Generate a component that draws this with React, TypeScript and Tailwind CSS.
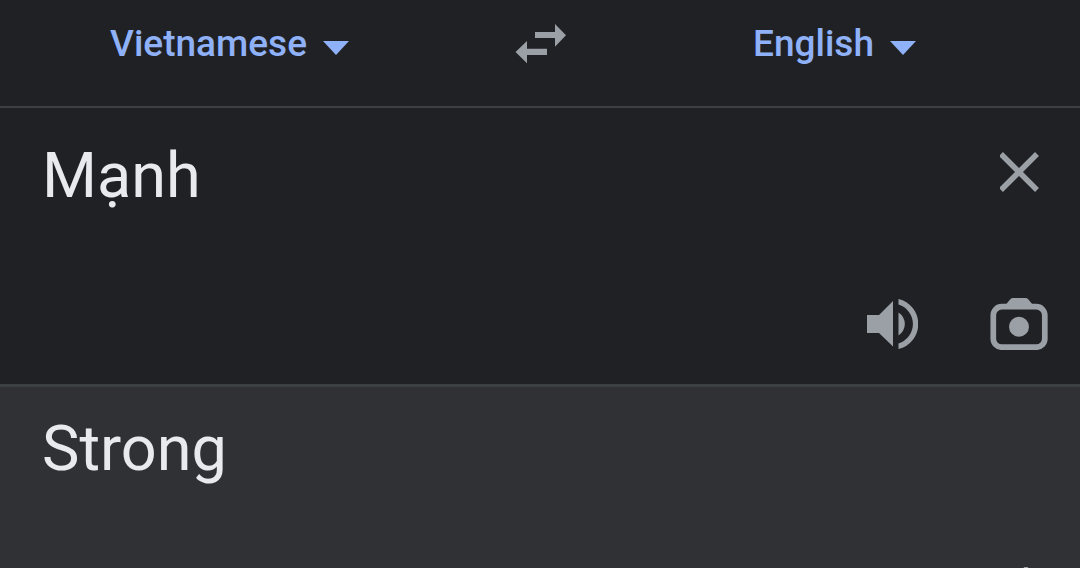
import { useState } from 'react'

const languages = ['Vietnamese', 'English']

type LanguageSelectProps = {
  label: string
  value: string
  onChange: (value: string) => void
}

function LanguageSelect({ label, value, onChange }: LanguageSelectProps) {
  return (
    <label className="flex items-center gap-4">
      <select
        aria-label={label}
        value={value}
        onChange={(e) => onChange(e.target.value)}
        className="appearance-none field-sizing-content bg-transparent text-[37px] leading-10 font-medium text-[#8fb1f7] outline-none"
      >
        {languages.map((language) => (
          <option key={language}>{language}</option>
        ))}
      </select>
      <svg className="mt-2 h-3.5 w-6.5" viewBox="0 0 26 14" fill="#8fb1f7" aria-hidden="true">
        <path d="M0 0h26L13 14z" />
      </svg>
    </label>
  )
}

function App() {
  const [source, setSource] = useState('Vietnamese')
  const [target, setTarget] = useState('English')
  const [text, setText] = useState('Mạnh')

  const swap = () => {
    setSource(target)
    setTarget(source)
  }

  return (
    <div className="flex h-screen flex-col overflow-hidden bg-[#202124] font-['Roboto','Noto_Sans',sans-serif] text-[#e8eaed]">
      {/* Language bar */}
      <header className="grid shrink-0 grid-cols-[1fr_162px_1fr] items-start border-b-2 border-[#3c4043] pt-6 pb-[42px]">
        <div className="flex justify-center">
          <LanguageSelect label="Source language" value={source} onChange={setSource} />
        </div>
        <button aria-label="Swap languages" onClick={swap} className="flex justify-center">
          <svg className="h-10 w-13" viewBox="0 0 52 40" fill="#9aa0a6">
            <path d="M21 8H41V0L52 11.300L41 22.700V14H21zM33 24.700V31H13V39.300L1.500 28L13 17V24.700z" />
          </svg>
        </button>
        <div className="flex justify-center pr-8">
          <LanguageSelect label="Target language" value={target} onChange={setTarget} />
        </div>
      </header>

      {/* Source text */}
      <section className="flex shrink-0 flex-col border-b-3 border-[#3c4043] pt-8 pr-8">
        <div className="flex items-start justify-between">
          <textarea
            aria-label="Source text"
            rows={1}
            value={text}
            onChange={(e) => setText(e.target.value)}
            className="min-w-0 flex-1 resize-none bg-transparent pl-10.5 text-[63px] leading-[72px] outline-none"
          />
          <button aria-label="Clear text" onClick={() => setText('')} className="mt-3 mr-2">
            <svg className="h-10 w-10" viewBox="0 0 40 40" stroke="#9aa0a6" strokeWidth="5.500">
              <path d="M1 2l36 36M37 2L1 38" />
            </svg>
          </button>
        </div>
        <div className="mt-[86px] mb-[34px] flex items-center justify-end gap-18">
          <button aria-label="Listen">
            <svg className="h-13 w-13" viewBox="0 0 52 52" fill="#9aa0a6">
              <path d="M1 17H13L27 3V48.500L13 35H1zM32.500 14.500A13.600 13.600 0 0 1 32.500 37.500z" />
              <path d="M32.500 1A25.700 25.700 0 0 1 32.500 51V45.500A20.400 20.400 0 0 0 32.500 6.500z" />
            </svg>
          </button>
          <button aria-label="Translate from camera">
            <svg className="h-13 w-14.5" viewBox="0 0 58 52">
              <path d="M15.500 7L20.500 1Q21.500 0 23 0H35.500Q37 0 38 1L43 7z" fill="#9aa0a6" />
              <rect x="3.300" y="8.700" width="51.500" height="40.500" rx="8.500" fill="none" stroke="#9aa0a6" strokeWidth="5.700" />
              <circle cx="29" cy="28.800" r="10" fill="#9aa0a6" />
            </svg>
          </button>
        </div>
      </section>

      {/* Translation */}
      <section className="flex flex-1 flex-col bg-[#303134] pt-6.5 pr-8 pl-10.5">
        <p className="shrink-0 text-[63px] leading-[72px]">{target === 'English' ? 'Strong' : text}</p>
        <button aria-label="Save translation" className="mt-20.5 shrink-0 self-end">
          <svg className="h-12 w-12" viewBox="-16 0 48 48" fill="#9aa0a6">
            <path d="M8 0h4l6 16 14 1-11 11 5 17-16-10-16 10 5-17-11-11 14-1z" />
          </svg>
        </button>
      </section>
    </div>
  )
}

export default App
